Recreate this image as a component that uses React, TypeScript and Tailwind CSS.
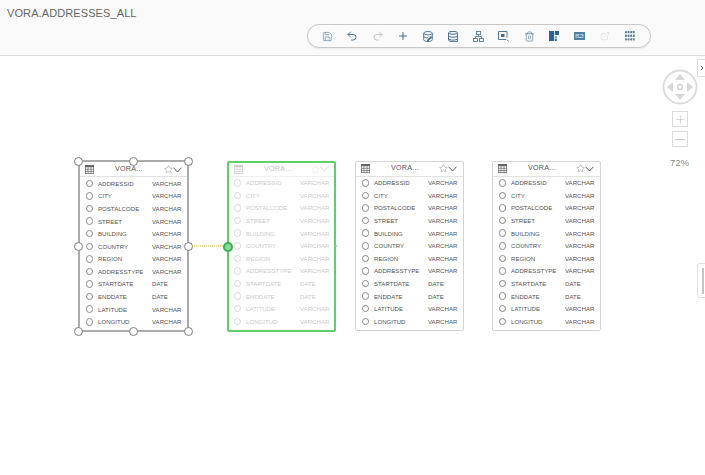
import React from "react";
import { Save, Undo2, Redo2, Plus, Trash2, ExternalLink, ChevronRight, Star } from "lucide-react";

const cols: [string, string][] = [
  ["ADDRESSID", "VARCHAR"], ["CITY", "VARCHAR"], ["POSTALCODE", "VARCHAR"], ["STREET", "VARCHAR"],
  ["BUILDING", "VARCHAR"], ["COUNTRY", "VARCHAR"], ["REGION", "VARCHAR"], ["ADDRESSTYPE", "VARCHAR"],
  ["STARTDATE", "DATE"], ["ENDDATE", "DATE"], ["LATITUDE", "VARCHAR"], ["LONGITUD", "VARCHAR"],
];

const blue = "#4f7c9e";

function DbEdit() {
  return (
    <svg width="10" height="11" viewBox="0 0 10 11" fill="none" stroke={blue} strokeWidth="1">
      <ellipse cx="5" cy="2.200" rx="4.300" ry="1.700" />
      <path d="M.7 2.200v6.600c0 1 1.900 1.700 4.300 1.700s4.300-.7 4.300-1.700V2.200" />
      <path d="M.7 5.200c0 1 1.900 1.700 4.300 1.700" />
      <path d="M4 9l4-4 1.300 1.300-4 4H4z" fill="#3f6f96" stroke="none" />
    </svg>
  );
}
function DbStack() {
  return (
    <svg width="10" height="11" viewBox="0 0 10 11" fill="none" stroke="#3f7097" strokeWidth="1">
      <ellipse cx="5" cy="1.800" rx="4.400" ry="1.400" />
      <path d="M.6 1.800v7.400c0 .8 2 1.400 4.400 1.400h4.400V1.800" />
      <path d="M.6 4.800c0 .8 2 1.400 4.400 1.400s4.400-.6 4.400-1.400" />
      <path d="M.6 7.700c0 .8 2 1.400 4.400 1.400s4.400-.6 4.400-1.400" />
    </svg>
  );
}
function Hierarchy() {
  return (
    <svg width="11" height="11" viewBox="0 0 11 11" fill="none" stroke={blue} strokeWidth="0.900">
      <rect x="3.500" y="0.500" width="4" height="3" />
      <rect x="0.500" y="7.500" width="4" height="3" />
      <rect x="6.500" y="7.500" width="4" height="3" />
      <path d="M5.500 3.500v2M2.500 7.500v-2h6v2" />
    </svg>
  );
}
function ViewFind() {
  return (
    <svg width="11" height="11" viewBox="0 0 11 11" fill="none" stroke={blue} strokeWidth="1">
      <path d="M8 8.500H.5V.5h8.500v6" />
      <rect x="3" y="3" width="3.500" height="3" fill="#3f6f96" stroke="none" />
      <path d="M9 8.500l1.500 2" />
    </svg>
  );
}
function Layout() {
  return (
    <svg width="10" height="10" viewBox="0 0 10 10">
      <rect x="0" y="0" width="5" height="10" fill="#2a6592" />
      <rect x="5.800" y="0" width="4.200" height="4" fill="#2a6592" />
      <rect x="5.800" y="5" width="2" height="2" fill="#6f9ab9" />
      <rect x="5.800" y="7.600" width="2" height="2.400" fill="#2a6592" />
    </svg>
  );
}
function Sql() {
  return (
    <svg width="11" height="8" viewBox="0 0 11 8">
      <rect width="11" height="8" fill="#4f7fa3" />
      <rect x="1.500" y="2" width="8" height="4" fill="#a7c1d5" />
      <path d="M2.500 4.500h1.500M5 3h1.500v1.500H5zM7.500 3v1.500H9" stroke="#3a6a90" strokeWidth="0.600" fill="none" />
    </svg>
  );
}
function Dots() {
  return (
    <svg width="10" height="10" viewBox="0 0 10 10" fill="#54809f">
      {[0, 3.600, 7.200].map((y) =>
        [0, 2.600, 5.200, 7.800].map((x) => (
          <rect key={`${x}-${y}`} x={x} y={y} width="1.900" height="2.300" rx="0.400" />
        ))
      )}
    </svg>
  );
}

function GridIcon({ faded }: { faded?: boolean }) {
  const c = faded ? "#cfcfcf" : "#666";
  return (
    <svg width="9" height="9" viewBox="0 0 9 9" className="shrink-0" fill="none" stroke={c} strokeWidth="0.700">
      <rect x="0.350" y="0.350" width="8.300" height="8.300" />
      <rect x="0" y="0" width="9" height="2.200" fill={c} stroke="none" />
      <path d="M3 2v7M6 2v7M0 4.300h9M0 6.500h9" />
    </svg>
  );
}

function Chevron({ color }: { color: string }) {
  return (
    <svg width="9" height="6" viewBox="0 0 9 6" fill="none" stroke={color} strokeWidth="0.900" className="shrink-0">
      <path d="M.5 .7L4.500 5 8.500 .7" />
    </svg>
  );
}

function Card({ left, selected, linked }: { left: number; selected?: boolean; linked?: boolean }) {
  const box = selected
    ? "top-[160px] w-[111px] h-[172px] border-2 border-[#ababab]"
    : linked
    ? "top-[161px] w-[109px] h-[171px] border-2 border-[#5fd068]"
    : "top-[161px] w-[109px] h-[170px] border border-[#d4d4d4]";
  const head = selected ? "h-[14px] mt-px pr-[5px]" : linked ? "h-[13.500px] pr-[5px]" : "h-[14.500px] pr-[6px]";
  const iconColor = linked ? "#cfcfcf" : "#555";
  return (
    <div className={`absolute bg-white rounded-[2px] flex flex-col ${box}`} style={{ left }}>
      <div className={`shrink-0 border-b flex items-center pl-[5px] ${head} ${linked ? "border-[#f0f0f0]" : "border-[#e2e2e2]"}`}>
        <GridIcon faded={linked} />
        <span className={`ml-[21px] text-[7.200px] tracking-[0.200px] ${linked ? "text-[#c4c4c4]" : "text-[#555]"}`}>VORA...</span>
        <Star size={9} strokeWidth={0.900} color={iconColor} className="ml-auto" />
        <Chevron color={iconColor} />
      </div>
      <div>
        {cols.map(([n, t]) => (
          <div
            key={n}
            className={`h-[12.600px] flex items-center text-[6.100px] ${linked ? "pl-[4.500px] text-[#cbcbcb]" : "pl-[5.500px] text-[#555]"}`}
          >
            <span className={`w-[7.500px] h-[7.500px] rounded-full border shrink-0 bg-white ${linked ? "border-[#d8d8d8]" : "border-[#888]"}`} />
            <span className="ml-[5px] w-[54px] whitespace-nowrap">{n}</span>
            <span className="whitespace-nowrap">{t}</span>
          </div>
        ))}
      </div>
    </div>
  );
}

function Handle({ x, y }: { x: number; y: number }) {
  return (
    <span
      className="absolute w-[9px] h-[9px] rounded-full bg-white border border-[#808080]"
      style={{ left: x - 4.500, top: y - 4.500 }}
    />
  );
}

export default function App() {
  const icons = [
    <Save size={11} color={blue} strokeWidth={1.300} />,
    <Undo2 size={12} color="#2f6288" strokeWidth={1.700} />,
    <Redo2 size={12} color="#b0b0b0" strokeWidth={1.400} />,
    <Plus size={12} color="#2f6288" strokeWidth={1.800} />,
    <DbEdit />,
    <DbStack />,
    <Hierarchy />,
    <ViewFind />,
    <Trash2 size={11} color={blue} strokeWidth={1.400} />,
    <Layout />,
    <Sql />,
    <ExternalLink size={10} color="#d4d4d4" strokeWidth={1.200} />,
    <Dots />,
  ];
  return (
    <div className="w-[705px] h-[475px] bg-white overflow-hidden relative font-['Liberation_Sans',sans-serif]">
      <header className="h-[56px] bg-[#fafafa] border-b border-[#dcdcdc] flex items-start relative">
        <h1 className="ml-[7px] mt-[5px] text-[11px] leading-[16px] text-[#666] font-normal tracking-[0.100px]">VORA.ADDRESSES_ALL</h1>
        <div className="absolute left-[307px] top-[24px] w-[344px] h-[24px] rounded-full border border-[#c8c8c8] bg-[#fafafa] shadow-[0_1px_2px_rgba(0,0,0,0.080)] flex items-center justify-between pl-[12px] pr-[13px]">
          {icons.map((ic, i) => (
            <span key={i} className="w-[14px] h-[14px] flex items-center justify-center">{ic}</span>
          ))}
        </div>
      </header>

      <Card left={78} selected />
      <Card left={227} linked />
      <Card left={355} />
      <Card left={492} />

      {[[78.500, 161], [133.500, 161], [188, 161], [78.500, 246], [188, 246], [78.500, 331], [133.500, 331], [188, 331]].map(([x, y]) => (
        <Handle key={`${x}-${y}`} x={x} y={y} />
      ))}

      <svg className="absolute left-[192px] top-[245px]" width="32" height="2" viewBox="0 0 32 2">
        <line x1="0" y1="1" x2="32" y2="1" stroke="#e5a63d" strokeWidth="1" strokeDasharray="1 1" />
      </svg>
      <span className="absolute left-[222.500px] top-[241.500px] w-[10px] h-[10px] rounded-full bg-[#9ad6a0] border-2 border-[#2fb54a]" />
      <span className="absolute left-[334.500px] top-[245px] w-[2px] h-[2px] rounded-full bg-[#8fd496]" />

      <button className="absolute left-[697px] top-[59px] w-[10px] h-[18px] bg-white border border-[#ddd] flex items-center justify-end">
        <ChevronRight size={8} strokeWidth={2.500} color="#444" className="shrink-0" />
      </button>

      <svg className="absolute left-[662px] top-[69px]" width="36" height="36" viewBox="0 0 36 36" fill="none">
        <circle cx="18" cy="18" r="16.500" stroke="#dcdcdc" strokeWidth="2" />
        <circle cx="18" cy="18" r="2.500" stroke="#d4d4d4" strokeWidth="1.500" />
        <path d="M18 5l5 6H13zM18 31l5-6H13zM5 18l6-5v10zM31 18l-6-5v10z" fill="#d8d8d8" />
      </svg>
      <div className="absolute left-[672px] top-[111px] w-[16px] h-[16px] border border-[#dcdcdc] bg-white flex items-center justify-center">
        <Plus size={13} color="#c8c8c8" strokeWidth={1.300} />
      </div>
      <div className="absolute left-[672px] top-[131px] w-[16px] h-[16px] border border-[#dcdcdc] bg-white flex items-center justify-center">
        <span className="w-[10px] h-px bg-[#c8c8c8]" />
      </div>
      <span className="absolute left-[670px] top-[157px] text-[9.500px] leading-[12px] text-[#888]">72%</span>

      <div className="absolute left-[697px] top-[263px] w-[10px] h-[35px] bg-white border border-[#e0e0e0] rounded-[2px] flex items-center pl-[4px]">
        <span className="w-[2px] h-[26px] bg-[#c4c4c4]" />
      </div>
    </div>
  );
}
